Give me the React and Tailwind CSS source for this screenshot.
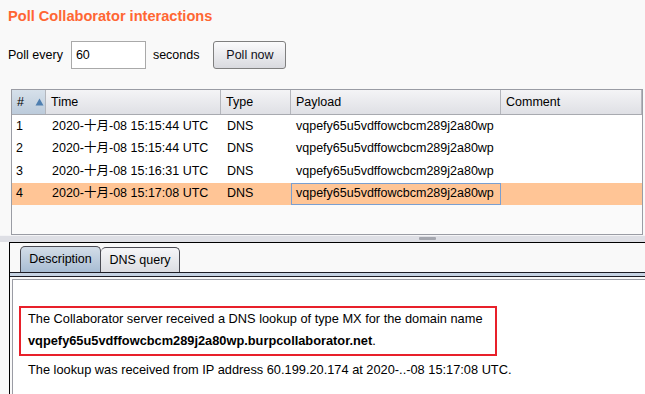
import { useState } from 'react';

const rows = [
  { id: 1, time: '2020-十月-08 15:15:44 UTC', type: 'DNS', payload: 'vqpefy65u5vdffowcbcm289j2a80wp' },
  { id: 2, time: '2020-十月-08 15:15:44 UTC', type: 'DNS', payload: 'vqpefy65u5vdffowcbcm289j2a80wp' },
  { id: 3, time: '2020-十月-08 15:16:31 UTC', type: 'DNS', payload: 'vqpefy65u5vdffowcbcm289j2a80wp' },
  { id: 4, time: '2020-十月-08 15:17:08 UTC', type: 'DNS', payload: 'vqpefy65u5vdffowcbcm289j2a80wp' },
];

const font = { fontFamily: '"Liberation Sans", Arial, "Noto Sans CJK SC", sans-serif' };

function HeaderCell({ children, className = '' }) {
  return (
    <div className={`h-full flex items-center pl-[5px] border-r border-[#b4b6bc] bg-gradient-to-b from-[#f4f4f6] to-[#dfe0e5] ${className}`}>
      {children}
    </div>
  );
}

function App() {
  const [interval, setIntervalValue] = useState('60');
  const [selected, setSelected] = useState(4);
  const [tab, setTab] = useState('description');

  return (
    <div className="w-[645px] h-[394px] overflow-hidden bg-[#f9f9f9] text-black text-[12.5px]" style={font}>
      <div className="h-[34px] pt-[6px] pl-[8px]">
        <h1 className="text-[14.6px] leading-[20px] font-bold text-[#ff6633]">Poll Collaborator interactions</h1>
      </div>

      <div className="mt-[7px] h-[28px] flex items-center pl-[8px]">
        <span>Poll every</span>
        <input
          value={interval}
          onChange={(e) => setIntervalValue(e.target.value)}
          className="ml-[8px] w-[75px] h-[28px] border border-[#a9a9a9] bg-white pl-[4px] outline-none"
        />
        <span className="ml-[7px]">seconds</span>
        <button className="ml-[14px] w-[73px] h-[28px] rounded-[3px] border border-[#7f7f7f] bg-gradient-to-b from-[#fbfbfc] to-[#d9dadf] text-[#101020]">
          Poll now
        </button>
      </div>

      <div className="mt-[20px] ml-[11px] w-[632px] h-[146px] border border-[#9a9ca4] bg-[#fafafa]">
        <div className="h-[25px] flex border-b border-[#a8aab0]">
          <div className="w-[34px] h-full flex items-center pl-[5px] border-r border-[#b4b6bc] bg-gradient-to-b from-[#d6e0ea] to-[#bccbdb]">
            <span>#</span>
            <svg width="9" height="8" viewBox="0 0 9 8" className="ml-[11px]">
              <path d="M4.5 0.5 L8.5 7.5 L0.5 7.5 Z" fill="#4f7fb0" />
            </svg>
          </div>
          <HeaderCell className="w-[175px]">Time</HeaderCell>
          <HeaderCell className="w-[70px]">Type</HeaderCell>
          <HeaderCell className="w-[210px]">Payload</HeaderCell>
          <HeaderCell className="w-[141px]">Comment</HeaderCell>
        </div>
        {rows.map((r) => {
          const isSel = r.id === selected;
          return (
            <div
              key={r.id}
              onClick={() => setSelected(r.id)}
              className={`h-[22.5px] flex items-center ${isSel ? 'bg-[#ffc596]' : 'bg-white'}`}
            >
              <div className="w-[34px] pl-[4px]">{r.id}</div>
              <div className="w-[175px] pl-[6px]">{r.time}</div>
              <div className="w-[70px] pl-[6px]">{r.type}</div>
              <div className={`w-[210px] h-full flex items-center pl-[4px] ${isSel ? 'border border-[#7a9fd0]' : 'pl-[5px]'}`}>
                {r.payload}
              </div>
              <div className="flex-1" />
            </div>
          );
        })}
      </div>

      <div className="h-[7px] bg-[#dedfe5] border-t border-[#f4f4f6] flex justify-center pl-[210px]">
        <div className="mt-[1px] w-[17px] h-[3px] bg-[#a4a6ae] rounded-[1px]" />
      </div>

      <div className="ml-[9px] border-t border-l border-black h-[200px]">
        <div className="h-[29px] flex items-end pl-[10px]">
          <button
            onClick={() => setTab('description')}
            className={`w-[81px] rounded-t-[5px] border border-b-0 border-[#4a4a52] ${tab === 'description' ? 'h-[26px] bg-gradient-to-b from-[#d3dde8] to-[#a8bdd3]' : 'h-[25px] bg-gradient-to-b from-[#f6f6f8] to-[#dcdde2]'}`}
          >
            Description
          </button>
          <button
            onClick={() => setTab('dns')}
            className={`w-[79px] rounded-t-[5px] border border-b-0 border-l-0 border-[#4a4a52] ${tab === 'dns' ? 'h-[26px] bg-gradient-to-b from-[#d3dde8] to-[#a8bdd3]' : 'h-[25px] bg-gradient-to-b from-[#f6f6f8] to-[#dcdde2]'}`}
          >
            DNS query
          </button>
        </div>
        <div className="h-[5px] border-t border-b border-[#1c1c24] bg-[#c6d3e3]" />
        <div className="mt-[2px] ml-[2px] h-[200px] bg-white border-t border-l border-[#9a9ca4] pt-[26px] pl-[6px] text-[12.8px]">
          {tab === 'description' ? (
            <>
              <div className="w-[478px] h-[50px] border-2 border-[#e8202a] pl-[7px] leading-[22px]">
                <p>The Collaborator server received a DNS lookup of type MX for the domain name</p>
                <p>
                  <b>vqpefy65u5vdffowcbcm289j2a80wp.burpcollaborator.net</b>.
                </p>
              </div>
              <p className="mt-[2px] pl-[9px] leading-[24px]">
                The lookup was received from IP address 60.199.20.174 at 2020-..-08 15:17:08 UTC.
              </p>
            </>
          ) : (
            <p className="pl-[9px]">MX query for vqpefy65u5vdffowcbcm289j2a80wp.burpcollaborator.net</p>
          )}
        </div>
      </div>
    </div>
  );
}

export default App;
